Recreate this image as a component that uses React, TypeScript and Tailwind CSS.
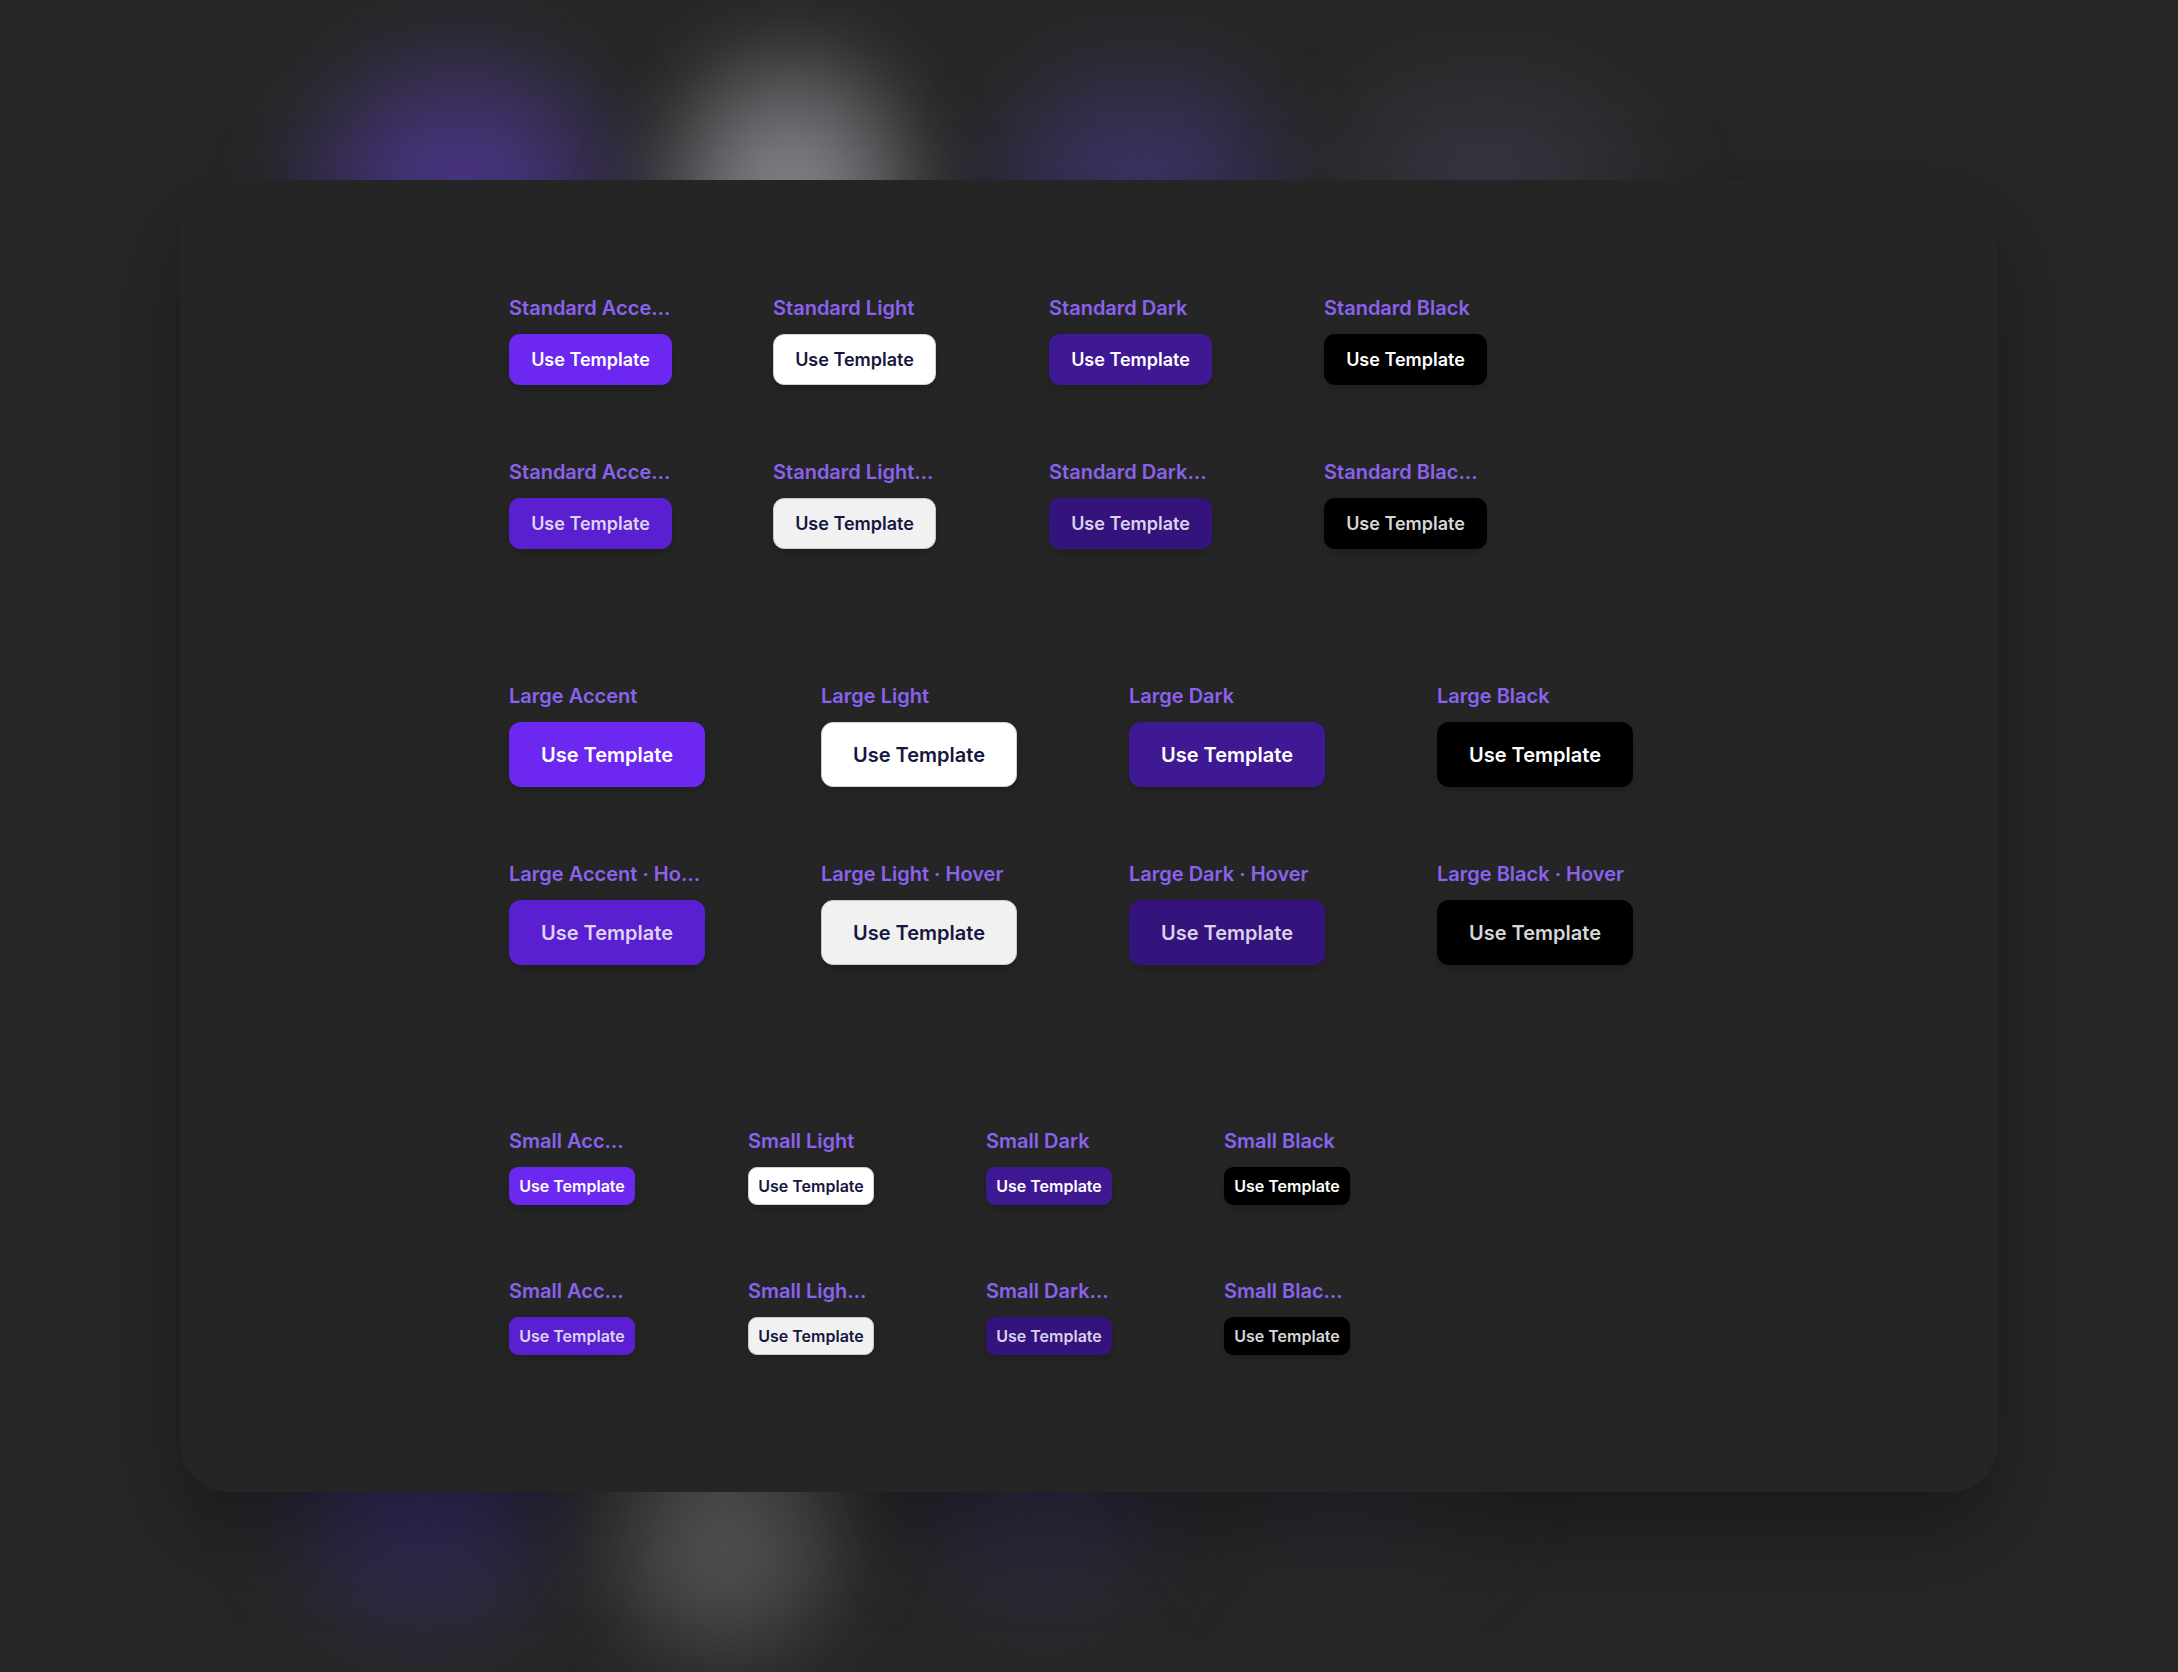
import React from "react";

type Variant =
  | "accent"
  | "accentHover"
  | "light"
  | "lightHover"
  | "dark"
  | "darkHover"
  | "black"
  | "blackHover";

const variantClass: Record<Variant, string> = {
  accent: "bg-[#6c28f1] text-white",
  accentHover: "bg-[#5a1fd0] text-[#ddd4f2]",
  light: "bg-white text-[#17163f] border border-[#cfcfd4]",
  lightHover: "bg-[#f1f1f1] text-[#17163f] border border-[#c9c9cc]",
  dark: "bg-[#3f1893] text-white",
  darkHover: "bg-[#35137d] text-[#d9d2ea]",
  black: "bg-black text-white",
  blackHover: "bg-black text-[#d6d6d6]",
};

const sizeClass = {
  standard: "w-[163px] h-[51px] rounded-[11px] text-[18px]",
  large: "w-[196px] h-[65px] rounded-[12px] text-[20px]",
  small: "w-[126px] h-[38px] rounded-[9px] text-[16px]",
};

type Size = keyof typeof sizeClass;

type Item = { label: string; variant: Variant };

const Cell = ({ item, size, width }: { item: Item; size: Size; width: string }) => (
  <div className={`flex flex-col gap-[14px] ${width}`}>
    <span className="text-[20px] leading-[24px] font-semibold text-[#8a62ee] whitespace-nowrap">
      {item.label}
    </span>
    <button
      className={`flex items-center justify-center font-semibold shadow-[0_4px_10px_rgba(0,0,0,0.18)] ${sizeClass[size]} ${variantClass[item.variant]}`}
    >
      Use Template
    </button>
  </div>
);

const Row = ({ items, size, widths }: { items: Item[]; size: Size; widths: string[] }) => (
  <div className="flex">
    {items.map((item, i) => (
      <Cell key={i} item={item} size={size} width={widths[i]} />
    ))}
  </div>
);

const standardWidths = ["w-[264px]", "w-[276px]", "w-[275px]", "w-[275px]"];
const largeWidths = ["w-[312px]", "w-[308px]", "w-[308px]", "w-[308px]"];
const smallWidths = ["w-[239px]", "w-[238px]", "w-[238px]", "w-[238px]"];

const App = () => {
  return (
    <div
      className="relative w-full h-[1672px] overflow-hidden bg-[#272727]"
      style={{ fontFamily: "Inter, 'Noto Sans', sans-serif" }}
    >
      {/* glow above the card */}
      <div className="absolute left-[250px] top-[30px] w-[420px] h-[400px] bg-[radial-gradient(ellipse_50%_55%_at_50%_50%,#553a9e_0%,#48357f_35%,transparent_100%)] blur-[30px]" />
      <div className="absolute left-[620px] top-[30px] w-[340px] h-[400px] bg-[radial-gradient(ellipse_50%_55%_at_50%_50%,#a09fa5_0%,#7e7d83_35%,transparent_100%)] blur-[30px]" />
      <div className="absolute left-[940px] top-[40px] w-[400px] h-[380px] bg-[radial-gradient(ellipse_50%_55%_at_50%_50%,#473873_0%,#3c3262_35%,transparent_100%)] blur-[30px]" />
      <div className="absolute left-[1270px] top-[50px] w-[430px] h-[360px] bg-[radial-gradient(ellipse_50%_55%_at_50%_50%,#403b4c_0%,#37343f_35%,transparent_100%)] blur-[30px]" />

      {/* glow below the card */}
      <div className="absolute left-[240px] top-[1300px] w-[370px] h-[380px] bg-[radial-gradient(ellipse_50%_55%_at_50%_45%,#3a2d66_0%,#332a55_35%,transparent_100%)] blur-[30px]" />
      <div className="absolute left-[560px] top-[1300px] w-[330px] h-[400px] bg-[radial-gradient(ellipse_50%_55%_at_50%_45%,#6c6c6c_0%,#585858_35%,transparent_100%)] blur-[30px]" />
      <div className="absolute left-[870px] top-[1300px] w-[350px] h-[360px] bg-[radial-gradient(ellipse_50%_55%_at_50%_45%,#322b4a_0%,#2e2a40_35%,transparent_100%)] blur-[30px]" />
      <div className="absolute left-[1150px] top-[1300px] w-[380px] h-[340px] bg-[radial-gradient(ellipse_50%_55%_at_50%_45%,#2f2d35_0%,#2b2a30_35%,transparent_100%)] blur-[30px]" />

      <div className="relative pt-[180px] px-[180px]">
        <div className="h-[1312px] rounded-[48px] bg-[#252525] shadow-[0_40px_90px_rgba(0,0,0,0.35)] pl-[329px] pt-[116px]">
          {/* Standard */}
          <div className="flex flex-col gap-[75px]">
            <Row
              size="standard"
              widths={standardWidths}
              items={[
                { label: "Standard Acce…", variant: "accent" },
                { label: "Standard Light", variant: "light" },
                { label: "Standard Dark", variant: "dark" },
                { label: "Standard Black", variant: "black" },
              ]}
            />
            <Row
              size="standard"
              widths={standardWidths}
              items={[
                { label: "Standard Acce…", variant: "accentHover" },
                { label: "Standard Light…", variant: "lightHover" },
                { label: "Standard Dark…", variant: "darkHover" },
                { label: "Standard Blac…", variant: "blackHover" },
              ]}
            />
          </div>

          {/* Large */}
          <div className="flex flex-col gap-[75px] mt-[135px]">
            <Row
              size="large"
              widths={largeWidths}
              items={[
                { label: "Large Accent", variant: "accent" },
                { label: "Large Light", variant: "light" },
                { label: "Large Dark", variant: "dark" },
                { label: "Large Black", variant: "black" },
              ]}
            />
            <Row
              size="large"
              widths={largeWidths}
              items={[
                { label: "Large Accent · Ho…", variant: "accentHover" },
                { label: "Large Light · Hover", variant: "lightHover" },
                { label: "Large Dark · Hover", variant: "darkHover" },
                { label: "Large Black · Hover", variant: "blackHover" },
              ]}
            />
          </div>

          {/* Small */}
          <div className="flex flex-col gap-[74px] mt-[164px]">
            <Row
              size="small"
              widths={smallWidths}
              items={[
                { label: "Small Acc…", variant: "accent" },
                { label: "Small Light", variant: "light" },
                { label: "Small Dark", variant: "dark" },
                { label: "Small Black", variant: "black" },
              ]}
            />
            <Row
              size="small"
              widths={smallWidths}
              items={[
                { label: "Small Acc…", variant: "accentHover" },
                { label: "Small Ligh…", variant: "lightHover" },
                { label: "Small Dark…", variant: "darkHover" },
                { label: "Small Blac…", variant: "blackHover" },
              ]}
            />
          </div>
        </div>
      </div>
    </div>
  );
};

export default App;
